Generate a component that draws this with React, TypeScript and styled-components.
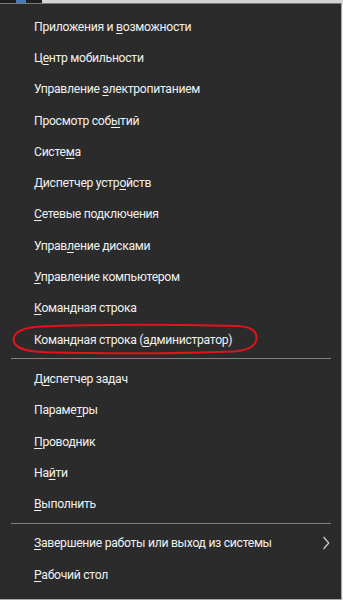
import { ReactElement } from 'react';
import styled, { createGlobalStyle } from 'styled-components';

type Item = {
  label: string;
  key: number; // index of the access-key letter
  submenu?: boolean;
  marked?: boolean;
};

const groups: Item[][] = [
  [
    { label: 'Приложения и возможности', key: 13 },
    { label: 'Центр мобильности', key: 1 },
    { label: 'Управление электропитанием', key: 11 },
    { label: 'Просмотр событий', key: 12 },
    { label: 'Система', key: 5 },
    { label: 'Диспетчер устройств', key: 14 },
    { label: 'Сетевые подключения', key: 0 },
    { label: 'Управление дисками', key: 5 },
    { label: 'Управление компьютером', key: 0 },
    { label: 'Командная строка', key: 0 },
    { label: 'Командная строка (администратор)', key: 18, marked: true },
  ],
  [
    { label: 'Диспетчер задач', key: 1 },
    { label: 'Параметры', key: 6 },
    { label: 'Проводник', key: 0 },
    { label: 'Найти', key: 2 },
    { label: 'Выполнить', key: 0 },
  ],
  [
    { label: 'Завершение работы или выход из системы', key: 0, submenu: true },
    { label: 'Рабочий стол', key: 0 },
  ],
];

const GlobalStyle = createGlobalStyle`
  html, body {
    margin: 0;
    padding: 0;
    background: #f2f2f2;
  }
  body {
    font-family: Roboto, 'Liberation Sans', sans-serif;
  }
`;

function Label({ item }: { item: Item }): ReactElement {
  const { label, key } = item;
  return (
    <ItemText>
      {label.slice(0, key)}
      <AccessKey>{label.charAt(key)}</AccessKey>
      {label.slice(key + 1)}
    </ItemText>
  );
}

function Chevron(): ReactElement {
  return (
    <ChevronIcon width='8' height='14' viewBox='0 0 8 14'>
      <path d='M1.5 1 L6.8 7 L1.5 13' fill='none' stroke='#c8c8c8' strokeWidth='1.3' />
    </ChevronIcon>
  );
}

function Marker(): ReactElement {
  return (
    <MarkerSvg width='248' height='32' viewBox='0 0 248 32'>
      <path
        d='M30 3.5 C80 1.5 170 1.8 226 3 C240 3.5 246 8 245.5 15.5 C245 23 238 27.5 222 28.5 C170 30.5 90 30.6 34 29.2 C14 28.6 2.5 24 2.6 16.6 C2.7 9 13 4.2 30 3.5 Z'
        fill='none'
        stroke='#e3121c'
        strokeWidth='2'
      />
    </MarkerSvg>
  );
}

export default function App(): ReactElement {
  return (
    <>
      <GlobalStyle />
      <Screen>
        <TopStrip>
          <StartTile>
            <StartGlyph />
          </StartTile>
        </TopStrip>
        <Menu>
          {groups.map((group, gi) => (
            <Group key={gi}>
              {gi > 0 && <Separator />}
              {group.map((item) => (
                <Row key={item.label}>
                  <Label item={item} />
                  {item.submenu && <Chevron />}
                  {item.marked && <Marker />}
                </Row>
              ))}
            </Group>
          ))}
        </Menu>
      </Screen>
    </>
  );
}

const Screen = styled.div`
  width: 343px;
  height: 600px;
  display: flex;
  flex-direction: column;
  background: #f2f2f2;
  overflow: hidden;
`;

const TopStrip = styled.div`
  height: 3px;
  display: flex;
  background: #d4d4d4;
`;

const StartTile = styled.div`
  width: 42px;
  height: 3px;
  background: #1f1f1f;
  display: flex;
  padding-left: 16px;
  box-sizing: border-box;
`;

const StartGlyph = styled.div`
  width: 10px;
  height: 3px;
  background: #4a78b8;
`;

const Menu = styled.div`
  width: 341px;
  height: 593px;
  box-sizing: content-box;
  background: #2b2b2b;
  border-top: 1px solid #7a7a7a;
  border-right: 1px solid #a8a8a8;
  border-bottom: 1px solid #a8a8a8;
  padding-top: 7px;
  display: flex;
  flex-direction: column;
`;

const Group = styled.div`
  display: flex;
  flex-direction: column;
`;

const Separator = styled.div`
  height: 1px;
  margin: 3px 10px 4px 11px;
  background: #808080;
`;

const Row = styled.div`
  position: relative;
  height: 31.3px;
  display: flex;
  align-items: center;
  padding-left: 34px;
  padding-right: 11px;
`;

const ItemText = styled.span`
  flex: 1;
  color: #f0f0f0;
  font-size: 12.2px;
  letter-spacing: -0.3px;
  line-height: 18px;
  white-space: nowrap;
`;

const AccessKey = styled.span`
  text-decoration: underline;
  text-underline-offset: 2px;
  text-decoration-thickness: 1px;
`;

const ChevronIcon = styled.svg`
  flex: none;
`;

const MarkerSvg = styled.svg`
  position: absolute;
  left: 11px;
  top: -0.5px;
  pointer-events: none;
`;
